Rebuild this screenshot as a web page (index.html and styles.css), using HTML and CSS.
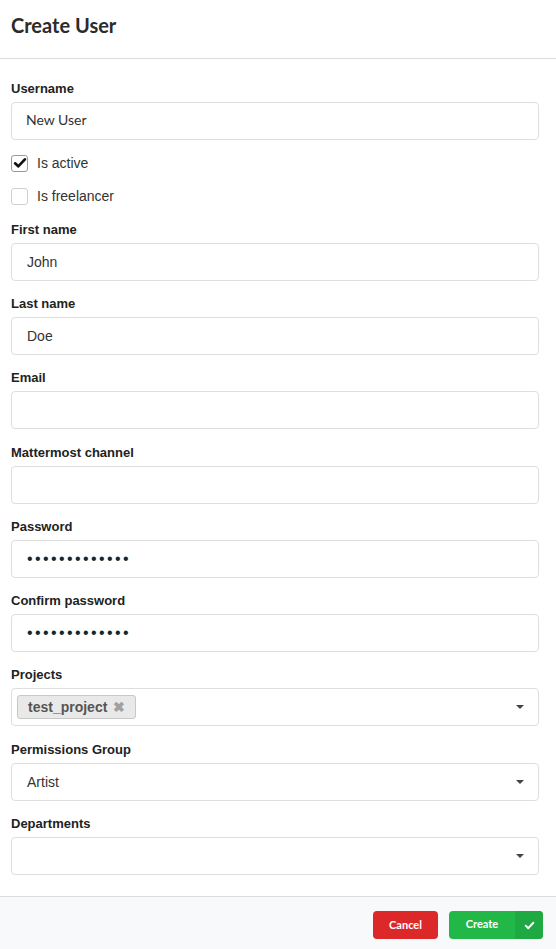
FILE: index.html
```html
<!DOCTYPE html>
<html>
<head>
<meta charset="utf-8">
<link rel="stylesheet" href="styles.css">
</head>
<body>
<div class="modal">
  <div class="header"><h1 class="title">Create User</h1></div>
  <div class="body">
    <div class="field">
      <div class="label">Username</div>
      <div class="input lato">New User</div>
    </div>
    <div class="check-row">
      <span class="box checked"><svg viewBox="0 0 16 16" width="14" height="14"><path d="M2.4 8.4 L6 11.8 L13.6 3.8" fill="none" stroke="#111" stroke-width="3.1" stroke-linecap="round" stroke-linejoin="round"/></svg></span>
      <span class="check-label">Is active</span>
    </div>
    <div class="check-row last">
      <span class="box"></span>
      <span class="check-label">Is freelancer</span>
    </div>
    <div class="field">
      <div class="label">First name</div>
      <div class="input">John</div>
    </div>
    <div class="field">
      <div class="label">Last name</div>
      <div class="input">Doe</div>
    </div>
    <div class="field">
      <div class="label">Email</div>
      <div class="input"></div>
    </div>
    <div class="field">
      <div class="label">Mattermost channel</div>
      <div class="input"></div>
    </div>
    <div class="field">
      <div class="label">Password</div>
      <div class="input dots">•••••••••••••</div>
    </div>
    <div class="field">
      <div class="label">Confirm password</div>
      <div class="input dots">•••••••••••••</div>
    </div>
    <div class="field">
      <div class="label">Projects</div>
      <div class="input select multi">
        <span class="tag">test_project <span class="tag-x">✖</span></span>
        <span class="caret"></span>
      </div>
    </div>
    <div class="field">
      <div class="label">Permissions Group</div>
      <div class="input select">Artist<span class="caret"></span></div>
    </div>
    <div class="field">
      <div class="label">Departments</div>
      <div class="input select"><span class="caret"></span></div>
    </div>
  </div>
  <div class="footer">
    <button class="btn cancel">Cancel</button>
    <button class="btn create"><span class="create-text">Create</span><span class="create-icon"><svg viewBox="0 0 12 12" width="11" height="11"><path d="M1.8 6.2 L4.6 9 L10.2 3" fill="none" stroke="#fff" stroke-width="2" stroke-linecap="round" stroke-linejoin="round"/></svg></span></button>
  </div>
</div>
</body>
</html>
```
FILE: styles.css
```css
* { box-sizing: border-box; }
html, body { margin: 0; padding: 0; background: #fff; }
body { font-family: "Liberation Sans", Arial, sans-serif; color: #333; width: 556px; height: 949px; overflow: hidden; }
.modal { display: flex; flex-direction: column; height: 949px; }
.header { height: 59px; padding: 13px 11px 0; border-bottom: 1px solid #dcdcdc; }
.title { margin: 0; font-family: Lato, sans-serif; font-weight: 700; font-size: 20px; line-height: 24px; color: #2b2b2b; }
.body { flex: 1; padding: 22px 17px 0 11px; }
.field { margin-bottom: 15.25px; }
.label { font-size: 13px; line-height: 16px; font-weight: 700; color: #222; margin-bottom: 5px; }
.input { height: 38px; border: 1px solid #dedede; border-radius: 4px; padding: 0 14px 0 15px; display: flex; align-items: center; font-size: 14px; color: #333; background: #fff; }
.input.lato { font-family: Lato, sans-serif; padding-left: 14px; padding-bottom: 4px; }
.input.dots { font-size: 16px; letter-spacing: 2.4px; color: #222; padding-left: 15px; }
.select { position: relative; }
.multi { padding-left: 5px; }
.caret { position: absolute; right: 14px; top: 16px; width: 0; height: 0; border-left: 4.5px solid transparent; border-right: 4.5px solid transparent; border-top: 4.5px solid #444; }
.tag { display: inline-flex; align-items: center; height: 24px; padding: 0 10px 0 10px; background: #e9e9e9; border: 1px solid #c8c8c8; border-radius: 3px; font-weight: 700; font-size: 14px; color: #555; }
.tag-x { font-size: 14px; color: #a0a0a0; margin-left: 6px; }
.check-row { display: flex; align-items: center; height: 16px; margin-bottom: 17px; }
.check-row.last { margin-bottom: 17.5px; }
.box { width: 17px; height: 17px; flex: none; border: 1px solid #d0d0d0; border-radius: 3px; display: flex; align-items: center; justify-content: center; background: #fff; }
.box.checked { border-color: #9a9a9a; }
.check-label { margin-left: 9px; font-size: 14px; color: #333; }
.footer { height: 53px; background: #f8f9fb; border-top: 1px solid #dcdcdc; display: flex; justify-content: flex-end; align-items: flex-start; padding: 14px 13px 0 0; gap: 11px; }
.btn { border: none; height: 28px; border-radius: 4px; font-family: Lato, sans-serif; font-weight: 700; font-size: 11px; color: #fff; padding: 0 0 2px; cursor: pointer; }
.cancel { width: 65px; background: #dc2828; }
.create { width: 94px; background: #22b848; display: flex; overflow: hidden; padding: 0; }
.create-text { flex: 1; display: flex; align-items: center; justify-content: center; padding-bottom: 3px; }
.create-icon { width: 28px; background: #1fa942; display: flex; align-items: center; justify-content: center; }
```
